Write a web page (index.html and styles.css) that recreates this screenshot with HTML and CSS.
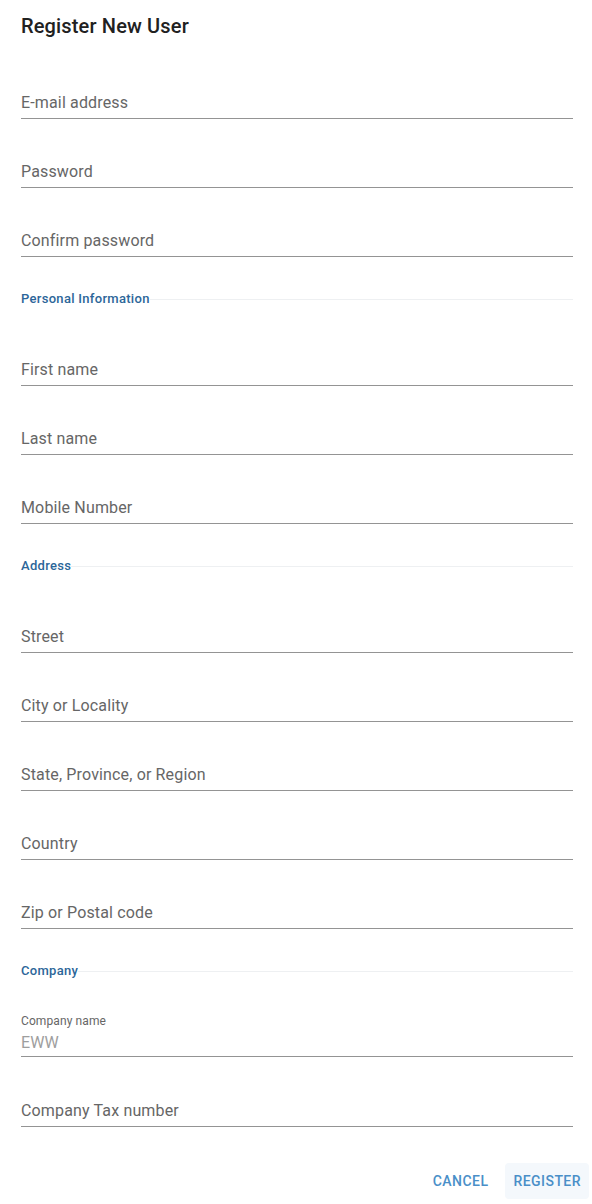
FILE: index.html
```html
<!DOCTYPE html>
<html>
<head>
<meta charset="utf-8">
<link rel="stylesheet" href="styles.css">
</head>
<body>
<div class="dialog">
  <h2 class="title">Register New User</h2>
  <div class="field"><span class="label">E-mail address</span></div>
  <div class="field"><span class="label">Password</span></div>
  <div class="field"><span class="label">Confirm password</span></div>
  <div class="section"><span class="section-text">Personal Information</span></div>
  <div class="field"><span class="label">First name</span></div>
  <div class="field"><span class="label">Last name</span></div>
  <div class="field"><span class="label">Mobile Number</span></div>
  <div class="section"><span class="section-text">Address</span></div>
  <div class="field"><span class="label">Street</span></div>
  <div class="field"><span class="label">City or Locality</span></div>
  <div class="field"><span class="label">State, Province, or Region</span></div>
  <div class="field"><span class="label">Country</span></div>
  <div class="field"><span class="label">Zip or Postal code</span></div>
  <div class="section"><span class="section-text">Company</span></div>
  <div class="field field-filled">
    <span class="small-label">Company name</span>
    <span class="value">EWW</span>
  </div>
  <div class="field field-tall"><span class="label">Company Tax number</span></div>
  <div class="actions">
    <button class="btn">Cancel</button>
    <button class="btn btn-active">Register</button>
  </div>
</div>
</body>
</html>
```

FILE: styles.css
```css
html, body {
  margin: 0;
  padding: 0;
  background: #fff;
}
body {
  font-family: Roboto, "Noto Sans", sans-serif;
  color: rgba(0,0,0,0.87);
}
.dialog {
  padding: 0 19px 0 21px;
}
.title {
  margin: 0;
  padding-top: 12px;
  height: 38px;
  font-size: 20px;
  line-height: 28px;
  font-weight: 500;
  color: #212121;
  letter-spacing: 0.15px;
}
.field {
  box-sizing: border-box;
  height: 69px;
  border-bottom: 1px solid #949494;
  display: flex;
  flex-direction: column;
  justify-content: flex-end;
  padding-bottom: 5px;
}
.label {
  font-size: 16px;
  line-height: 20px;
  color: #666;
  letter-spacing: 0.15px;
}
.field-filled {
  height: 68px;
  padding-bottom: 3px;
}
.field-tall {
  height: 70px;
}
.small-label {
  font-size: 12px;
  line-height: 14px;
  color: #666;
  margin-bottom: 5px;
  letter-spacing: 0.1px;
}
.value {
  font-size: 16px;
  line-height: 20px;
  color: #9e9e9e;
  letter-spacing: 0.15px;
}
.section {
  box-sizing: border-box;
  height: 60px;
  padding-top: 34px;
  display: flex;
  align-items: flex-start;
}
.section-text {
  font-size: 13px;
  line-height: 16px;
  font-weight: 500;
  color: #2c6699;
  letter-spacing: 0.3px;
}
.section::after {
  content: "";
  flex: 1;
  height: 1px;
  background: #eef0f2;
  margin-top: 8px;
}
.actions {
  display: flex;
  justify-content: flex-end;
  gap: 9px;
  margin-top: 36px;
  margin-right: -16px;
  padding-bottom: 6px;
}
.btn {
  font-family: Roboto, "Noto Sans", sans-serif;
  font-size: 14px;
  font-weight: 500;
  letter-spacing: 0.45px;
  text-transform: uppercase;
  color: #4a8fc8;
  background: transparent;
  border: none;
  border-radius: 4px;
  height: 36px;
  padding: 0 8px;
}
.btn-active {
  background: #f4f8fc;
}
```
